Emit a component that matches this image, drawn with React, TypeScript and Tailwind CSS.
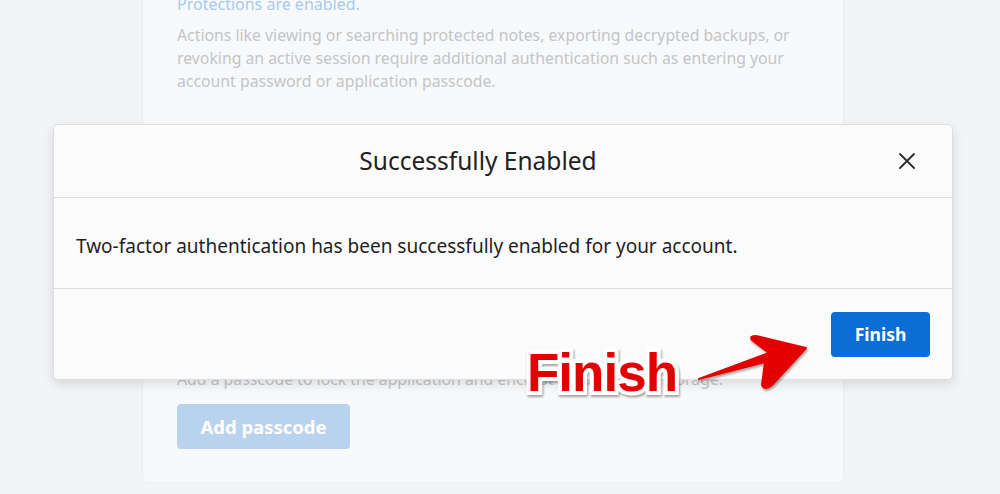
import React from 'react';

// Faded settings page behind a "Successfully Enabled" dialog, with a red callout

function CloseIcon() {
  return (
    <svg width="18" height="18" viewBox="0 0 18 18" fill="none">
      <path d="M2 2L16 16M16 2L2 16" stroke="#2b2b2b" strokeWidth="1.8" strokeLinecap="round" />
    </svg>
  );
}

function Arrow() {
  return (
    <svg className="absolute left-0 top-0" width="1000" height="494" viewBox="0 0 1000 494">
      <defs>
        <filter id="sh" x="-20%" y="-20%" width="140%" height="140%">
          <feDropShadow dx="1" dy="2" stdDeviation="1.2" floodColor="#000" floodOpacity="0.35" />
        </filter>
      </defs>
      <path
        d="M699 379 L769 353 L752 340 Q749 336 756 336 L806 348 L772 385 Q765 391 762 385 L765 362 Z"
        fill="#e30000"
        stroke="#e30000"
        strokeWidth="2"
        strokeLinejoin="round"
        filter="url(#sh)"
      />
    </svg>
  );
}

export default function App() {
  const font = { fontFamily: '"Noto Sans", "Open Sans", sans-serif' };
  return (
    <div className="relative h-[494px] w-full overflow-hidden bg-[#f3f4f6]" style={font}>
      {/* background page card */}
      <div className="ml-[142px] -mt-[40px] w-[702px] rounded-md border border-[#eceef0] bg-[#f8f9fa] px-[34px] pt-[32px] pb-[33px]">
        <div className="text-[16px] leading-[23px] text-[#a9c9f0]">Protections are enabled.</div>
        <p className="mt-[8px] text-[15.8px] leading-[23px] text-[#c3c5c8]">
          Actions like viewing or searching protected notes, exporting decrypted backups, or revoking an active
          session require additional authentication such as entering your account password or application passcode.
        </p>
        <div className="h-[275px]" />
        <p className="text-[15.8px] leading-[23px] text-[#c3c5c8]">
          Add a passcode to lock the application and encrypt on-device key storage.
        </p>
        <button className="mt-[13px] h-[45px] w-[173px] rounded-[4px] bg-[#b9d3ee] text-[18.5px] font-bold text-white">
          Add passcode
        </button>
      </div>

      {/* dialog */}
      <div className="absolute left-[53px] top-[124px] w-[900px] rounded-[5px] border border-[#dcdde0] bg-[#fbfbfc] shadow-[0_4px_12px_rgba(0,0,0,0.12)]">
        <div className="relative flex h-[73px] items-center justify-center border-b border-[#dcdde0] pr-[50px]">
          <h2 className="text-[24.5px] text-[#222]">Successfully Enabled</h2>
          <span className="absolute right-[36px] top-[27px]">
            <CloseIcon />
          </span>
        </div>
        <div className="flex h-[91px] items-center border-b border-[#dcdde0] px-[22px] pt-[6px]">
          <p className="text-[19px] text-[#1f1f1f]">
            Two-factor authentication has been successfully enabled for your account.
          </p>
        </div>
        <div className="flex h-[90px] items-start justify-end pr-[22px] pt-[23px]">
          <button className="h-[45px] w-[99px] rounded-[4px] bg-[#0a6ed6] text-[17.5px] font-bold text-white">
            Finish
          </button>
        </div>
      </div>

      {/* callout */}
      <Arrow />
      <div
        className="absolute left-[527px] top-[343px] text-[53px] font-bold leading-[60px] tracking-[-1px] text-[#e30000] [paint-order:stroke_fill] [-webkit-text-stroke:8px_white] drop-shadow-[1px_2px_1px_rgba(0,0,0,0.35)]"
        style={{ fontFamily: '"Liberation Sans", Arial, sans-serif' }}
      >
        Finish
      </div>
    </div>
  );
}
